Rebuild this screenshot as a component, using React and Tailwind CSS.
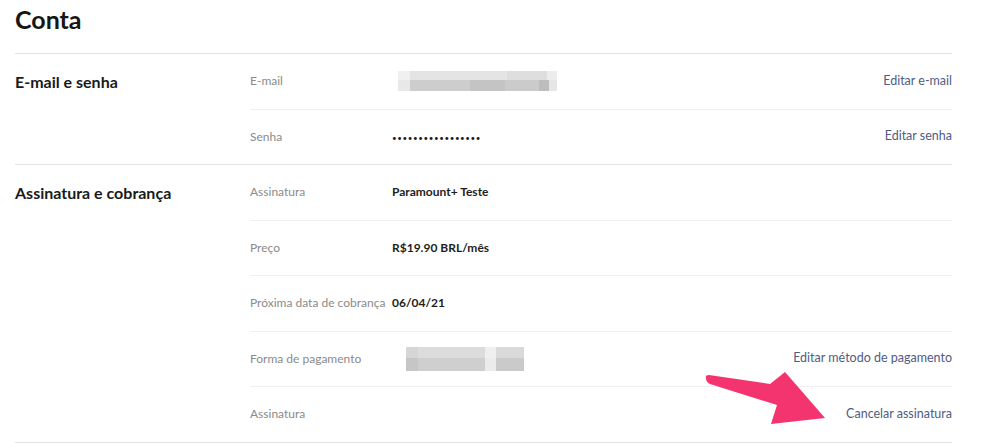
import React from 'react';

const font = { fontFamily: 'Lato, "Open Sans", Arial, sans-serif' };

const Blur = ({ kind }) => {
  if (kind === 'email') {
    return (
      <div className="flex flex-col w-[159px] h-[20px] ml-[6px]">
        <div className="flex h-[9px]">
          <div className="w-[12px] bg-[#f0f0f0]" />
          <div className="flex-1 bg-[#e4e4e4]" />
          <div className="w-[40px] bg-[#dedede]" />
          <div className="w-[10px] bg-[#ececec]" />
        </div>
        <div className="flex h-[11px]">
          <div className="w-[12px] bg-[#e8e8e8]" />
          <div className="w-[60px] bg-[#cdcdcd]" />
          <div className="w-[35px] bg-[#c4c4c4]" />
          <div className="flex-1 bg-[#cbcbcb]" />
          <div className="w-[10px] bg-[#bdbdbd]" />
          <div className="w-[8px] bg-[#e6e6e6]" />
        </div>
      </div>
    );
  }
  return (
    <div className="flex flex-col w-[118px] h-[24px] ml-[14px]">
      <div className="flex h-[11px]">
        <div className="w-[12px] bg-[#d6d6d6]" />
        <div className="w-[67px] bg-[#dcdcdc]" />
        <div className="w-[11px] bg-[#efefef]" />
        <div className="flex-1 bg-[#d9d9d9]" />
      </div>
      <div className="flex h-[13px]">
        <div className="w-[12px] bg-[#c6c6c6]" />
        <div className="w-[67px] bg-[#cfcfcf]" />
        <div className="w-[11px] bg-[#ebebeb]" />
        <div className="flex-1 bg-[#cacaca]" />
      </div>
    </div>
  );
};

const Row = ({ label, value, action, blur, last }) => (
  <div className={`flex items-center ${last ? 'h-[54.5px]' : 'h-[55.5px] border-b border-[#f0f0f0]'}`}>
    <div className="w-[142px] text-[12px] text-[#8a8a8a] whitespace-nowrap">{label}</div>
    <div className="flex-1 text-[12px] font-bold text-[#1e1e1e]">
      {blur ? <Blur kind={blur} /> : value}
    </div>
    {action && <div className="text-[12.5px] text-[#505c84]">{action}</div>}
  </div>
);

const Section = ({ title, children }) => (
  <div className="flex border-b border-[#e2e2e2]">
    <div className="w-[235px] h-[55px] flex items-center text-[16px] font-bold text-[#1a1a1a]">{title}</div>
    <div className="flex-1">{children}</div>
  </div>
);

export default function App() {
  return (
    <div className="relative w-[984px] h-[446px] bg-white overflow-hidden" style={font}>
      <div className="pl-[15px] pr-[32px]">
        <div className="h-[54px] flex items-start pt-[2px] border-b border-[#e2e2e2]">
          <h1 className="text-[25px] font-bold text-[#161616] leading-[34px]">Conta</h1>
        </div>
        <Section title="E-mail e senha">
          <Row label="E-mail" blur="email" action="Editar e-mail" />
          <Row
            label="Senha"
            value={<span className="font-normal text-[8px] tracking-[0.6px]">•••••••••••••••••</span>}
            action="Editar senha"
            last
          />
        </Section>
        <Section title="Assinatura e cobrança">
          <Row label="Assinatura" value="Paramount+ Teste" />
          <Row label="Preço" value="R$19.90 BRL/mês" />
          <Row label="Próxima data de cobrança" value="06/04/21" />
          <Row label="Forma de pagamento" blur="card" action="Editar método de pagamento" />
          <Row label="Assinatura" action="Cancelar assinatura" last />
        </Section>
      </div>
      <svg className="absolute left-0 top-0 pointer-events-none" width="984" height="446" viewBox="0 0 984 446">
        <path
          d="M706 378 Q705 375 709 375 L770 384 L785 372 L825 418 L771 424 L777 405 L710 384 Q706 382 706 378 Z"
          fill="#f3346e"
        />
      </svg>
    </div>
  );
}
